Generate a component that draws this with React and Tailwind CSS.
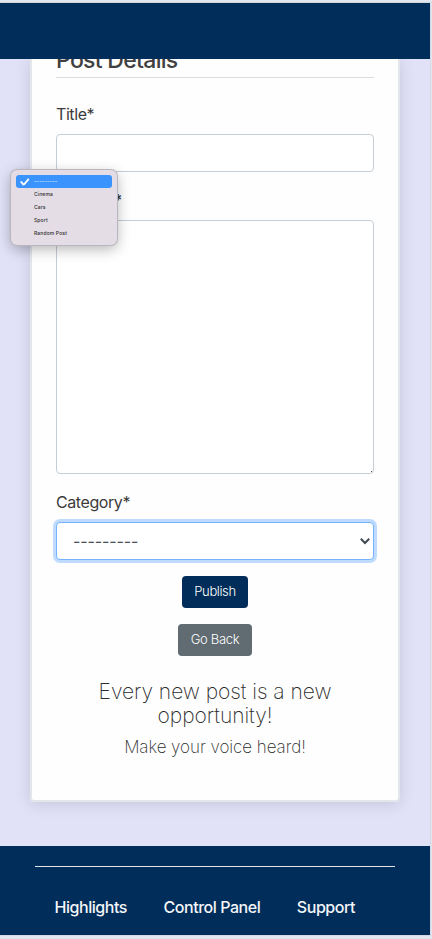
const SANS = "font-['Inter','Liberation_Sans',sans-serif]";

function Label({ children }) {
  return (
    <label className="block h-6 text-[16px] leading-6 tracking-[-0.42px] text-[#3b3b3b]">{children}</label>
  );
}

function CategoryMenu() {
  const options = ["Cinema", "Cars", "Sport", "Random Post"];
  return (
    <div className="absolute left-[11px] top-[170px] h-[75px] w-[106px] rounded-[6px] bg-[#e5dde6] px-[5px] pt-[5px] text-[5px] font-medium tracking-[0.13px] text-[#2c2c2c] shadow-[0_0_0_1px_#b9b6bf,0_4px_14px_rgba(0,0,0,0.3)]">
      <div className="flex h-[13px] items-center rounded-[3px] bg-[#3b93fd] pl-[4px] text-white">
        <svg className="mr-[4px] h-[8px] w-[10px]" viewBox="0 0 10 8" fill="none" stroke="white" strokeWidth="1.8">
          <path d="M0.5 4 L1.6 4.2 L3.2 6.4 L4.3 6.2 L8.8 0.8" />
        </svg>
        <span className="tracking-[0.3px]">---------</span>
      </div>
      {options.map((option) => (
        <div key={option} className="flex h-[13px] items-center pl-[18px]">
          {option}
        </div>
      ))}
    </div>
  );
}

export default function App() {
  return (
    <div className={`relative flex h-[939px] w-[432px] flex-col overflow-hidden bg-[#e1e6ef] ${SANS}`}>
      <div className="h-[3px] shrink-0 border-b border-[#d3d7dd]" />
      <div className="w-[431px] border-r border-[#d6d9e4]">
        <header className="h-14 bg-[#002d59]" />
        <main className="h-[787px] overflow-hidden bg-[#e1e1f7] pl-[30px]">
          <div className="h-[743px] w-[370px] rounded-b-[4px] border-2 border-t-0 border-[#e3e7ec] bg-[#fefefe] px-6 shadow-[0_2px_16px_rgba(0,0,50,0.13)]">
            <div className="flex h-[19px] items-end overflow-hidden border-b border-[#dcdddf]">
              <h1 className="mb-[3px] shrink-0 whitespace-nowrap text-[23px] font-medium leading-[28px] tracking-[-0.7px] text-[#404040]">Post Details</h1>
            </div>
            <div className="pt-6">
              <Label>Title*</Label>
              <div className="mt-2 h-[38px] rounded-[4px] border border-[#c6cdd4] bg-white" />
            </div>
            <div className="pt-4">
              <Label>Content<span className="pl-[0.5px] font-bold">*</span></Label>
              <div className="mt-2 flex h-[254px] items-end justify-end rounded-[4px] border border-[#c6cdd4] bg-white p-px">
                <span className="h-px w-px bg-[#555]" />
              </div>
            </div>
            <div className="pt-4">
              <Label>Category*</Label>
              <div className="mt-2 flex h-[38px] items-center justify-between rounded-[4px] border border-[#75b4fb] bg-white pl-4 pr-[3px] text-[#495057] shadow-[0_0_0_3px_#bfdbff]">
                <span className="text-[16px] leading-6 tracking-[-0.1px]">---------</span>
                <svg className="h-[8px] w-[10px]" viewBox="0 0 10 8" fill="none" stroke="#414a52" strokeWidth="2">
                  <path d="M0.8 1.8 L5 6 L9.2 1.8" />
                </svg>
              </div>
            </div>
            <div className="flex flex-col items-center gap-4 pt-4 text-[13px] font-light text-white">
              <button className="h-8 w-[66px] rounded-[4px] bg-[#002d59] tracking-[-0.4px]">Publish</button>
              <button className="h-8 w-[74px] rounded-[4px] bg-[#606b72] tracking-[-0.3px]">Go Back</button>
            </div>
            <div className="pt-6 text-center text-[#2c2c2c]">
              <p className="text-[21px] font-extralight leading-6 tracking-[-0.05px]">Every new post is a new<br />opportunity!</p>
              <p className="pt-[7px] text-[17px] font-extralight leading-6 tracking-[-0.05px]">Make your voice heard!</p>
            </div>
          </div>
        </main>
        <footer className="h-[89px] bg-[#002d59] px-[35px] pt-5">
          <div className="h-px bg-[#dfe2e6]" />
          <nav className="flex gap-[36.5px] pl-[19.5px] pt-7 text-[16px] font-medium leading-6 tracking-[-0.45px] text-[#f4f6f9]">
            <a>Highlights</a>
            <a>Control Panel</a>
            <a>Support</a>
          </nav>
        </footer>
      </div>
      <div className="h-px w-[431px] bg-[#d6d9e4]" />
      <CategoryMenu />
    </div>
  );
}
